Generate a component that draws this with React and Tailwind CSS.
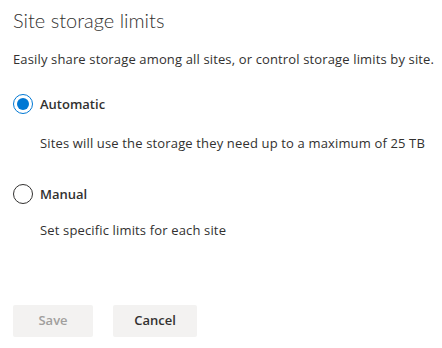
import React from "react";

function Radio({ checked }) {
  return checked ? (
    <span className="w-5 h-5 rounded-full border border-[#0078d4] flex items-center justify-center shrink-0">
      <span className="w-3 h-3 rounded-full bg-[#0078d4]" />
    </span>
  ) : (
    <span className="w-5 h-5 rounded-full border border-[#323130] shrink-0" />
  );
}

export default function App() {
  return (
    <div className="w-[442px] h-[348px] overflow-hidden bg-white text-[#323130] px-[13px] pt-[6px]" style={{ fontFamily: '"Open Sans", "Noto Sans", sans-serif' }}>
      <h1 className="text-[20px] font-light leading-[28px] text-[#323130]" style={{ fontFamily: 'Lato, "Open Sans", sans-serif' }}>Site storage limits</h1>
      <p className="text-[13px] leading-[20px] mt-[15px] tracking-[0.14px] whitespace-nowrap">Easily share storage among all sites, or control storage limits by site.</p>
      <div className="mt-[25px] flex items-center gap-[7px]">
        <Radio checked />
        <span className="text-[13px] font-semibold leading-[20px]">Automatic</span>
      </div>
      <p className="pl-[27px] mt-[19px] text-[13px] leading-[20px] tracking-[0.15px] whitespace-nowrap">Sites will use the storage they need up to a maximum of 25 TB</p>
      <div className="mt-[31px] flex items-center gap-[7px]">
        <Radio />
        <span className="text-[13px] font-semibold leading-[20px]">Manual</span>
      </div>
      <p className="pl-[27px] mt-[16px] text-[13px] leading-[20px] tracking-[0.15px] whitespace-nowrap">Set specific limits for each site</p>
      <div className="mt-[65px] flex gap-5">
        <button className="w-20 h-8 bg-[#f3f2f1] text-[#a19f9d] text-[13px] font-semibold rounded-[2px]">Save</button>
        <button className="w-[84px] h-8 bg-[#f3f2f1] text-[#323130] text-[13px] font-semibold rounded-[2px]">Cancel</button>
      </div>
    </div>
  );
}
